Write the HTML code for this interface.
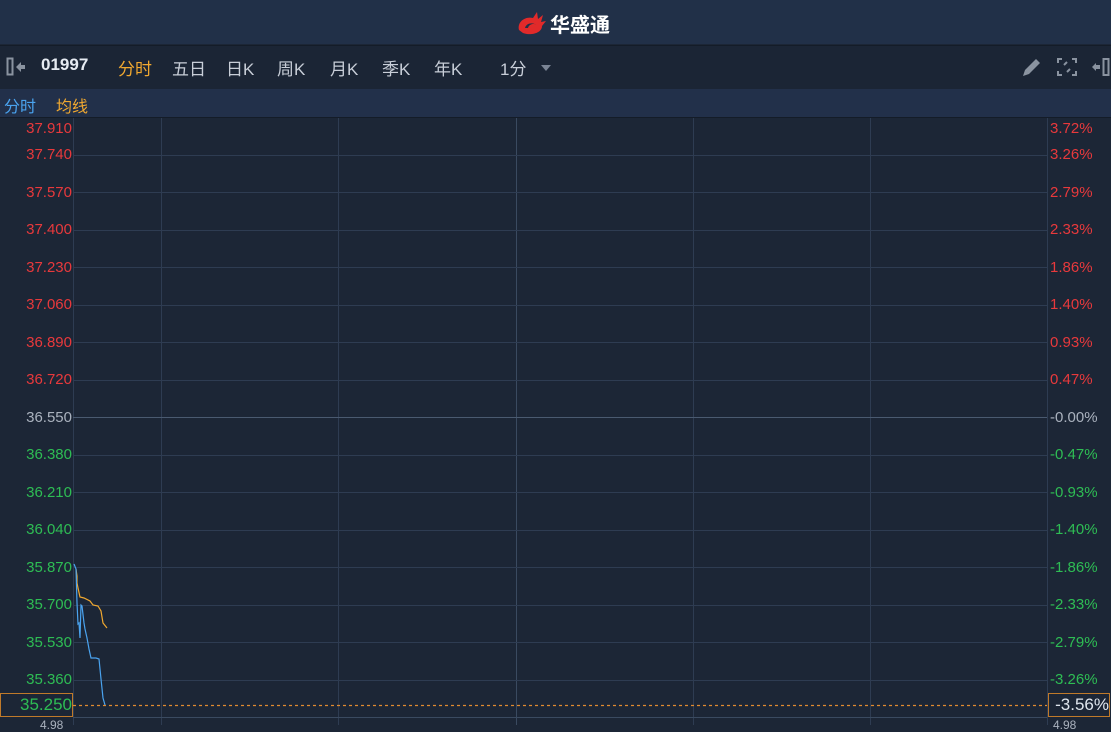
<!DOCTYPE html><html><head><meta charset="utf-8"><style>
body{margin:0;width:1111px;height:725px;overflow:hidden;background:#1c2636;font-family:"Liberation Sans","Noto Sans CJK SC",sans-serif;position:relative}
.a{position:absolute}
.top{left:0;top:0;width:1111px;height:44px;background:#213048}
.tb{left:0;top:45px;width:1111px;height:43px;background:#1b2535;border-top:1px solid #141c28}
.lg{left:0;top:89px;width:1111px;height:28px;background:#22304a;border-bottom:1px solid #141c28}
.tab{top:55px;font-size:17px;color:#c8ced8}
.l{font-size:15px;width:72px;text-align:right;left:0}
.r{font-size:15px;left:1050px}
.red{color:#e8393c}.grn{color:#2ebd54}.gry{color:#aab2be}
</style></head><body>
<div class="a top"></div>
<svg class="a" style="left:515px;top:10px" width="34" height="26" viewBox="0 0 34 26"><path d="M4 20 C2 12 10 6 18 8 L22 2 L23 9 L28 5 L26 12 L31 11 L27 16 C27 23 16 26 8 23 Z" fill="#e12a2a"/><path d="M10 18 C11 13 18 12 21 15 C19 13 14 14 13 18 Z" fill="#213048"/></svg>
<div class="a" style="left:550px;top:9px;font-size:20px;font-weight:bold;color:#fff">华盛通</div>
<div class="a tb"></div>
<svg class="a" style="left:6px;top:57px" width="26" height="20"><rect x="1.5" y="1.5" width="5" height="16" fill="none" stroke="#8a93a0" stroke-width="2"/><path d="M10 10 L15 5 L15 8 L19 8 L19 12 L15 12 L15 15 Z" fill="#8a93a0"/></svg>
<div class="a tab" style="left:41px;font-weight:bold;color:#e6ebf2">01997</div>
<div class="a tab" style="left:118px;color:#f0a830">分时</div>
<div class="a tab" style="left:172px">五日</div>
<div class="a tab" style="left:226px">日K</div>
<div class="a tab" style="left:277px">周K</div>
<div class="a tab" style="left:330px">月K</div>
<div class="a tab" style="left:382px">季K</div>
<div class="a tab" style="left:434px">年K</div>
<div class="a tab" style="left:500px">1分</div>
<div class="a" style="left:541px;top:65px;width:0;height:0;border-left:5px solid transparent;border-right:5px solid transparent;border-top:6px solid #7a8494"></div>
<svg class="a" style="left:1020px;top:55px" width="90" height="24"><path d="M3 21 L5 15 L16 4 L20 8 L9 19 Z" fill="#8a93a0"/><path d="M42 4h-4v4M52 4h4v4M42 20h-4v-4M52 20h4v-4M44 10l3-3M50 14l-3 3" stroke="#8a93a0" stroke-width="2" fill="none"/><path d="M72 12 L76 8 L76 10 L80 10 L80 14 L76 14 L76 16 Z" fill="#8a93a0"/><rect x="83.5" y="4" width="5" height="16" fill="none" stroke="#8a93a0" stroke-width="2"/></svg>
<div class="a lg"></div>
<div class="a" style="left:4px;top:93px;font-size:16px;color:#4aa3ef">分时</div>
<div class="a" style="left:56px;top:93px;font-size:16px;color:#f0a830">均线</div>
<svg class="a" style="left:0;top:118px" width="1111" height="607">
<g stroke="#2e3c52" stroke-width="1">
<line x1="73.5" y1="0" x2="73.5" y2="607"/><line x1="161.5" y1="0" x2="161.5" y2="607"/><line x1="338.5" y1="0" x2="338.5" y2="607"/><line x1="516.5" y1="0" x2="516.5" y2="607" stroke="#3a4a60"/><line x1="693.5" y1="0" x2="693.5" y2="607"/><line x1="870.5" y1="0" x2="870.5" y2="607"/><line x1="1047.5" y1="0" x2="1047.5" y2="607"/>
</g>
<g stroke="#2e3c52">
<line x1="73" x2="1047" y1="37.5" y2="37.5"/><line x1="73" x2="1047" y1="74.5" y2="74.5"/><line x1="73" x2="1047" y1="112.5" y2="112.5"/><line x1="73" x2="1047" y1="149.5" y2="149.5"/><line x1="73" x2="1047" y1="187.5" y2="187.5"/><line x1="73" x2="1047" y1="224.5" y2="224.5"/><line x1="73" x2="1047" y1="262.5" y2="262.5"/><line x1="73" x2="1047" y1="299.5" y2="299.5" stroke="#4a5a70"/><line x1="73" x2="1047" y1="337.5" y2="337.5"/><line x1="73" x2="1047" y1="374.5" y2="374.5"/><line x1="73" x2="1047" y1="412.5" y2="412.5"/><line x1="73" x2="1047" y1="449.5" y2="449.5"/><line x1="73" x2="1047" y1="487.5" y2="487.5"/><line x1="73" x2="1047" y1="524.5" y2="524.5"/><line x1="73" x2="1047" y1="562.5" y2="562.5"/><line x1="73" x2="1047" y1="599.5" y2="599.5" stroke="#3a4a60"/>
</g>
<line x1="73" x2="1047" y1="587.5" y2="587.5" stroke="#e08a30" stroke-width="1.2" stroke-dasharray="3,3"/>
<polyline fill="none" stroke="#f0a830" stroke-width="1.2" points="76,451 77,458 77,465 78,470 80,479 84,480 90,483 93,487 98,488 101,493 103,505 107,510"/>
<polyline fill="none" stroke="#4aa3ef" stroke-width="1.2" points="74,446 76,451 77,485 78,506 79,505 80,520 81,487 82,488 84,505 85,511 87,520 89,531 91,540 96,540 99,541 101,561 103,580 105,587"/>
</svg>
<div class="a l red" style="top:120px">37.910</div><div class="a r red" style="top:120px">3.72%</div>
<div class="a l red" style="top:146px">37.740</div><div class="a r red" style="top:146px">3.26%</div>
<div class="a l red" style="top:184px">37.570</div><div class="a r red" style="top:184px">2.79%</div>
<div class="a l red" style="top:221px">37.400</div><div class="a r red" style="top:221px">2.33%</div>
<div class="a l red" style="top:259px">37.230</div><div class="a r red" style="top:259px">1.86%</div>
<div class="a l red" style="top:296px">37.060</div><div class="a r red" style="top:296px">1.40%</div>
<div class="a l red" style="top:334px">36.890</div><div class="a r red" style="top:334px">0.93%</div>
<div class="a l red" style="top:371px">36.720</div><div class="a r red" style="top:371px">0.47%</div>
<div class="a l gry" style="top:409px">36.550</div><div class="a r gry" style="top:409px">-0.00%</div>
<div class="a l grn" style="top:446px">36.380</div><div class="a r grn" style="top:446px">-0.47%</div>
<div class="a l grn" style="top:484px">36.210</div><div class="a r grn" style="top:484px">-0.93%</div>
<div class="a l grn" style="top:521px">36.040</div><div class="a r grn" style="top:521px">-1.40%</div>
<div class="a l grn" style="top:559px">35.870</div><div class="a r grn" style="top:559px">-1.86%</div>
<div class="a l grn" style="top:596px">35.700</div><div class="a r grn" style="top:596px">-2.33%</div>
<div class="a l grn" style="top:634px">35.530</div><div class="a r grn" style="top:634px">-2.79%</div>
<div class="a l grn" style="top:671px">35.360</div><div class="a r grn" style="top:671px">-3.26%</div>
<div class="a" style="left:40px;top:718px;font-size:12px;color:#aab2be">4.98</div>
<div class="a" style="left:1053px;top:718px;font-size:12px;color:#aab2be">4.98</div>
<div class="a" style="left:0;top:693px;width:71px;height:22px;border:1px solid #c07a2a;background:#1c2636;color:#2ebd54;font-size:17px;text-align:right;line-height:22px">35.250</div>
<div class="a" style="left:1048px;top:693px;width:60px;height:22px;border:1px solid #c07a2a;background:#1c2636;color:#dfe6ee;font-size:17px;text-align:right;line-height:22px">-3.56%</div>
</body></html>
